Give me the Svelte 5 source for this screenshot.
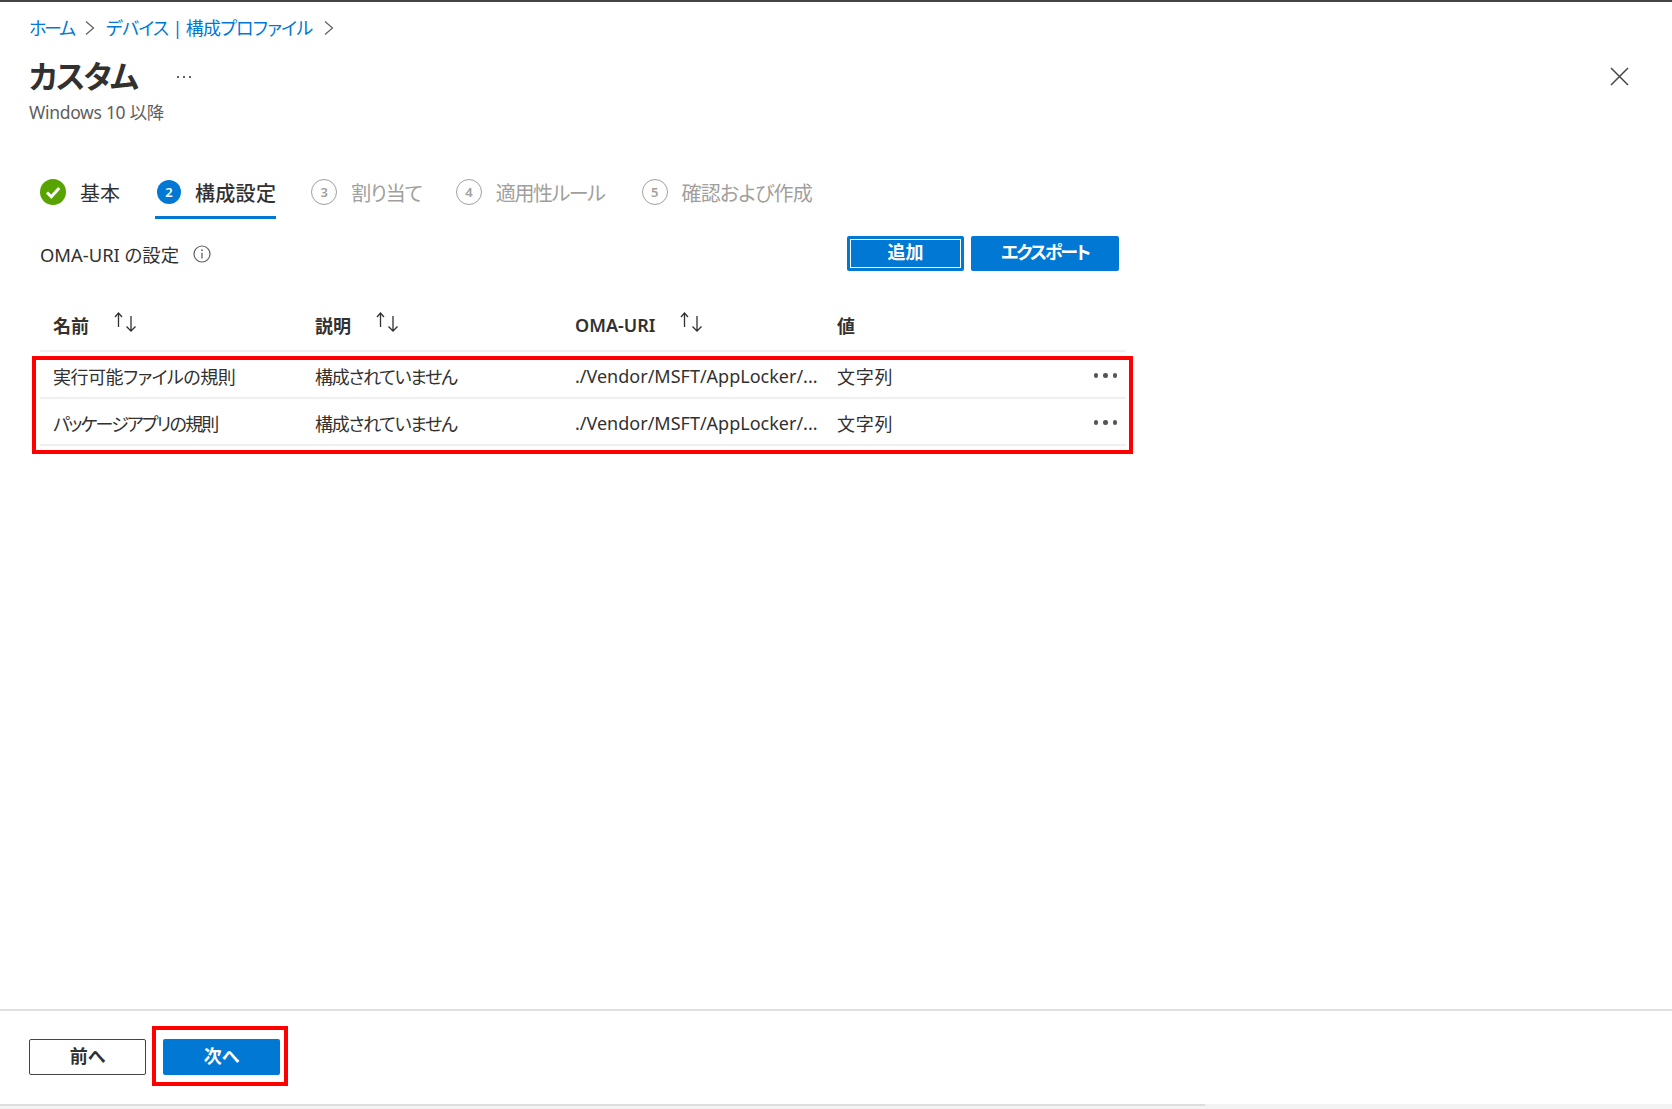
<script>
  const steps = [
    { n: 1, label: "基本", state: "done" },
    { n: 2, label: "構成設定", state: "active" },
    { n: 3, label: "割り当て", state: "todo" },
    { n: 4, label: "適用性ルール", state: "todo" },
    { n: 5, label: "確認および作成", state: "todo" }
  ];
  const columns = [
    { label: "名前", sort: true },
    { label: "説明", sort: true },
    { label: "OMA-URI", sort: true },
    { label: "値", sort: false }
  ];
  const rows = [
    { name: "実行可能ファイルの規則", cls: "name-a", desc: "構成されていません", uri: "./Vendor/MSFT/AppLocker/...", value: "文字列" },
    { name: "パッケージアプリの規則", cls: "name-b", desc: "構成されていません", uri: "./Vendor/MSFT/AppLocker/...", value: "文字列" }
  ];
</script>

<div class="page">
  <nav class="crumbs">
    <a class="home" href="#home">ホーム</a>
    <svg class="chev" width="10" height="16" viewBox="0 0 10 16"><path d="M1 1.5 L8.5 8 L1 14.5" /></svg>
    <a class="profiles" href="#profiles">デバイス | 構成プロファイル</a>
    <svg class="chev" width="10" height="16" viewBox="0 0 10 16"><path d="M1 1.5 L8.5 8 L1 14.5" /></svg>
  </nav>

  <header class="title-row">
    <h1>カスタム</h1>
    <span class="more">
      <i></i><i></i><i></i>
    </span>
    <svg class="close" width="19" height="19" viewBox="0 0 19 19"><path d="M1 1 L18 18 M18 1 L1 18" /></svg>
  </header>
  <p class="sub">Windows 10 以降</p>

  <div class="steps">
    {#each steps as step}
      <div class="step {step.state} s{step.n}">
        {#if step.state === "done"}
          <svg class="badge" width="26" height="26" viewBox="0 0 26 26">
            <circle cx="13" cy="13" r="13" fill="#57a300" />
            <path d="M7 13.5 L11.3 17.8 L19.2 9" fill="none" stroke="#fff" stroke-width="3" />
          </svg>
        {:else}
          <span class="num">{step.n}</span>
        {/if}
        <span class="step-label">{step.label}</span>
      </div>
    {/each}
  </div>

  <div class="toolbar">
    <div class="setting">
      <span>OMA-URI の設定</span>
      <svg width="18" height="18" viewBox="0 0 18 18">
        <circle cx="9" cy="9" r="8" fill="none" stroke="#605e5c" stroke-width="1.2" />
        <path d="M9 7.8 V13.5" stroke="#605e5c" stroke-width="1.3" />
        <circle cx="9" cy="5.2" r="0.9" fill="#605e5c" />
      </svg>
    </div>
    <div class="actions">
      <button class="primary focused">追加</button>
      <button class="primary wide">エクスポート</button>
    </div>
  </div>

  <div class="table">
    <div class="row head">
      {#each columns as col}
        <div class="cell">
          <span>{col.label}</span>
          {#if col.sort}
            <svg class="sort" width="24" height="20" viewBox="0 0 24 20">
              <path d="M4.5 15 V1 M1 5 L4.5 1 L8 5" />
              <path d="M17 19 V4 M12.5 14.5 L17 19 L21.5 14.5" />
            </svg>
          {/if}
        </div>
      {/each}
    </div>
    <div class="rows">
      {#each rows as row}
        <div class="row">
          <div class="cell {row.cls}">{row.name}</div>
          <div class="cell desc">{row.desc}</div>
          <div class="cell">{row.uri}</div>
          <div class="cell value">
            <span class="value-text">{row.value}</span>
            <span class="dots"><i></i><i></i><i></i></span>
          </div>
        </div>
      {/each}
      <div class="mark rows-mark"></div>
    </div>
  </div>

  <footer class="footer">
    <button class="secondary">前へ</button>
    <div class="next-wrap">
      <button class="primary next">次へ</button>
      <div class="mark next-mark"></div>
    </div>
  </footer>
  <div class="scrollbar"><div class="thumb"></div></div>
</div>

<style>
  :global(body) {
    margin: 0;
    background: #fff;
  }

  .page {
    box-sizing: border-box;
    width: 1672px;
    height: 1109px;
    display: flex;
    flex-direction: column;
    border-top: 2px solid #444;
    font-family: "Noto Sans", "Noto Sans CJK JP", sans-serif;
    font-feature-settings: "palt";
    font-size: 18px;
    color: #323130;
    overflow: hidden;
  }

  .crumbs {
    display: flex;
    align-items: center;
    height: 26px;
    margin-top: 13px;
    padding-left: 29px;
    gap: 11px;
  }

  .crumbs a {
    color: #0078d4;
    text-decoration: none;
    line-height: 26px;
  }

  .crumbs .home {
    letter-spacing: -2.2px;
  }

  .crumbs .profiles {
    letter-spacing: -0.7px;
  }

  .chev path {
    fill: none;
    stroke: #605e5c;
    stroke-width: 1.2;
  }

  .title-row {
    display: flex;
    align-items: center;
    height: 40px;
    margin-top: 15px;
    padding-left: 29px;
  }

  h1 {
    margin: 0;
    font-size: 31px;
    font-weight: 600;
    line-height: 40px;
    letter-spacing: -1.6px;
  }

  .more {
    display: flex;
    gap: 4px;
    margin-left: 40px;
    margin-top: 2px;
  }

  .more i {
    width: 2px;
    height: 2px;
    border-radius: 50%;
    background: #323130;
  }

  .close {
    margin-left: auto;
    margin-right: 43px;
    margin-top: 1px;
  }

  .close path {
    fill: none;
    stroke: #444;
    stroke-width: 1.5;
  }

  .sub {
    margin: 4px 0 0;
    padding-left: 29px;
    line-height: 24px;
    font-size: 17.5px;
    letter-spacing: -0.3px;
    color: #605e5c;
  }

  .steps {
    display: flex;
    gap: 33px;
    margin-top: 52px;
    padding-left: 38px;
  }

  .step {
    display: flex;
    align-items: center;
    gap: 14px;
    height: 32px;
    padding: 0 2px 8px;
    border-bottom: 3px solid transparent;
    font-size: 20px;
    color: #a19f9d;
  }

  .step.done {
    color: #323130;
    font-weight: 400;
  }

  .step.active {
    color: #323130;
    font-weight: 500;
    border-bottom-color: #0078d4;
  }

  .s2 {
    padding-right: 0;
  }

  .s2 .step-label {
    letter-spacing: 0.3px;
  }

  .s3 .step-label {
    letter-spacing: -1.1px;
  }

  .s4 {
    margin-left: -3px;
  }

  .s4 .step-label {
    letter-spacing: -1.4px;
  }

  .s5 .step-label {
    letter-spacing: -0.8px;
  }

  .num {
    box-sizing: border-box;
    width: 26px;
    height: 26px;
    display: flex;
    align-items: center;
    justify-content: center;
    border: 1.5px solid #a19f9d;
    border-radius: 50%;
    font-size: 13px;
    font-weight: 600;
  }

  .active .num {
    width: 24px;
    height: 24px;
    background: #0078d4;
    border: none;
    color: #fff;
  }

  .toolbar {
    display: flex;
    justify-content: space-between;
    align-items: center;
    width: 1079px;
    height: 35px;
    margin-top: 17px;
    padding-left: 40px;
  }

  .setting {
    display: flex;
    align-items: center;
    gap: 14px;
    font-size: 18.4px;
  }

  .actions {
    display: flex;
    gap: 7px;
  }

  button {
    font: inherit;
    font-feature-settings: inherit;
    font-weight: 600;
    border-radius: 2px;
    padding: 0 0 4px;
    cursor: pointer;
  }

  .actions button {
    padding-bottom: 5px;
  }

  .primary {
    height: 35px;
    width: 117px;
    background: #0078d4;
    border: none;
    color: #fff;
  }

  .primary.wide {
    width: 148px;
    letter-spacing: -2px;
  }

  .focused {
    outline: 1px solid #fff;
    outline-offset: -4px;
  }

  .table {
    width: 1086px;
    margin: 29px 0 0 40px;
  }

  .row {
    display: grid;
    grid-template-columns: 275px 260px 262px 1fr;
    align-items: center;
    height: 47px;
    box-sizing: border-box;
    border-bottom: 2px solid #f0f0f0;
  }

  .row.head {
    height: 52px;
    font-weight: 600;
  }

  .cell {
    padding-left: 13px;
    padding-top: 2px;
    white-space: nowrap;
  }

  .row:not(.head) .cell + .cell {
    padding-left: 0;
  }

  .head .cell + .cell {
    padding-left: 0;
  }

  .head .cell {
    display: flex;
    align-items: center;
    padding-top: 0;
  }

  .sort {
    margin-left: 25px;
    margin-top: -6px;
  }

  .sort path {
    fill: none;
    stroke: #323130;
    stroke-width: 1.3;
  }

  .name-a {
    letter-spacing: -0.5px;
  }

  .name-b {
    letter-spacing: -1.8px;
  }

  .desc {
    letter-spacing: -1.3px;
  }

  .value {
    display: flex;
    justify-content: space-between;
    align-items: center;
    padding-right: 9px;
  }

  .value-text {
    letter-spacing: 0.7px;
  }

  .dots {
    display: flex;
    gap: 5px;
  }

  .dots i {
    width: 4.5px;
    height: 4.5px;
    border-radius: 50%;
    background: #555;
  }

  .rows,
  .next-wrap {
    position: relative;
  }

  .mark {
    position: absolute;
    box-sizing: border-box;
    border: 4px solid #f00;
    pointer-events: none;
  }

  .rows-mark {
    top: 4px;
    bottom: -8px;
    left: -8px;
    right: -7px;
  }

  .footer {
    display: flex;
    gap: 17px;
    margin-top: auto;
    padding: 28px 0 29px 29px;
    border-top: 2px solid #e0e0e0;
  }

  .secondary {
    box-sizing: border-box;
    width: 117px;
    height: 36px;
    background: #fff;
    border: 1.5px solid #444;
    color: #323130;
  }

  .next {
    display: block;
    height: 36px;
  }

  .next-mark {
    top: -13px;
    bottom: -11px;
    left: -11px;
    right: -8px;
  }

  .scrollbar {
    height: 5px;
    background: #f3f3f3;
    flex: none;
  }

  .thumb {
    width: 1205px;
    height: 2px;
    background: #ddd;
  }
</style>
